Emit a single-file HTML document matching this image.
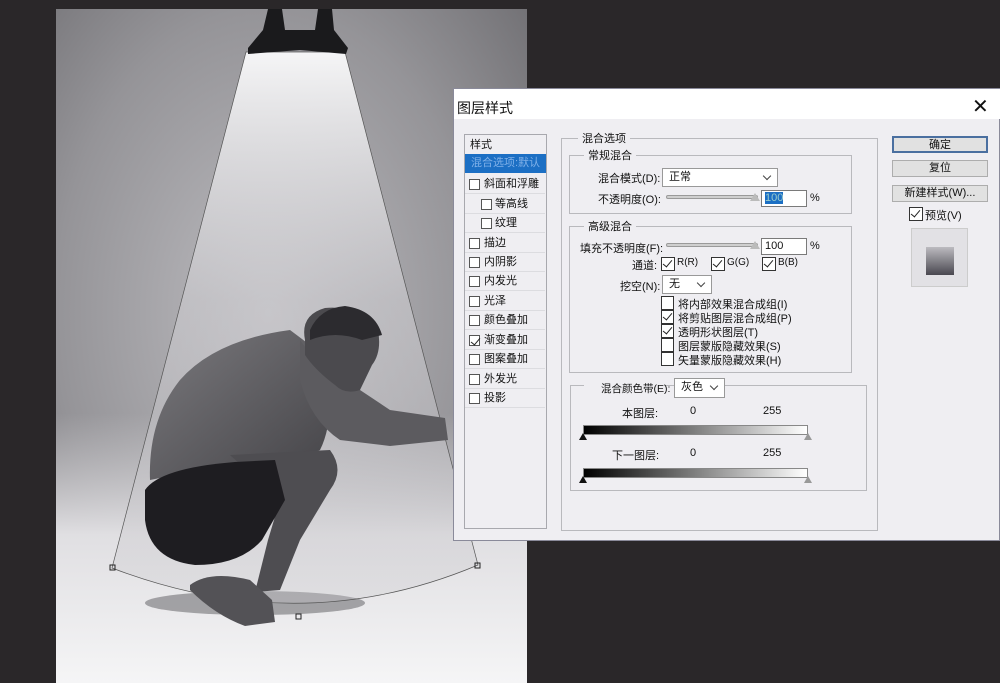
<!DOCTYPE html>
<html><head><meta charset="utf-8"><style>
*{margin:0;padding:0;box-sizing:border-box}
body{width:1000px;height:683px;overflow:hidden;background:#2a2729;position:relative;font-family:"Liberation Sans","Noto Sans CJK SC",sans-serif;font-size:11px;color:#111}
.a{position:absolute;white-space:nowrap}
.box{position:absolute;border:1px solid #b9b9bd}
.cb{position:absolute;width:12px;height:12px;border:1px solid #333;background:#fff}
.cbl{position:absolute;width:11px;height:11px;border:1px solid #555;background:#fff}
.chk:after{content:"";position:absolute;left:3px;top:0px;width:4px;height:8px;border:solid #222;border-width:0 1.5px 1.5px 0;transform:rotate(40deg)}
.leg{position:absolute;background:#efeef2;padding:0 4px}
.btn{position:absolute;background:#e1e1e1;border:1px solid #adadad;text-align:center;line-height:15px}
.inp{position:absolute;background:#fff;border:1px solid #7a7a7a;padding-left:3px;line-height:15px}
.sl{position:absolute;height:4px;background:#cfcfcf;border:1px solid #9a9a9a;border-radius:2px}
.dd{position:absolute;background:#fff;border:1px solid #999;padding-left:6px;line-height:17px}
.dd:after{content:"";position:absolute;right:7px;top:4px;width:5px;height:5px;border:solid #444;border-width:0 1px 1px 0;transform:rotate(45deg)}
.row{position:absolute;left:1px;width:80px;height:19px;border-bottom:1px solid #dcdce0;line-height:18px;padding-left:19px}
.row .cbl{left:4px;top:4px}
</style></head><body>
<svg class="a" style="left:0;top:0" width="1000" height="683">
<defs>
<radialGradient id="bg" cx="0.45" cy="0.45" r="0.75"><stop offset="0" stop-color="#bcbbbf"/><stop offset="0.6" stop-color="#959498"/><stop offset="1" stop-color="#6e6d71"/></radialGradient>
<linearGradient id="fl" x1="0" y1="0" x2="0" y2="1"><stop offset="0" stop-color="#fff" stop-opacity="0"/><stop offset="0.6" stop-color="#d8d7da" stop-opacity="0"/><stop offset="0.78" stop-color="#e0dfe2"/><stop offset="1" stop-color="#f5f5f6"/></linearGradient>
<linearGradient id="cone" x1="0" y1="0" x2="0" y2="1"><stop offset="0" stop-color="#fafafb" stop-opacity="0.95"/><stop offset="0.45" stop-color="#d0cfd3" stop-opacity="0.55"/><stop offset="1" stop-color="#c8c7cb" stop-opacity="0.3"/></linearGradient>
<linearGradient id="skin" x1="0" y1="0" x2="1" y2="1"><stop offset="0" stop-color="#7a797d"/><stop offset="1" stop-color="#454448"/></linearGradient>
</defs>
<rect x="56" y="9" width="471" height="674" fill="url(#bg)"/>
<rect x="56" y="9" width="471" height="674" fill="url(#fl)"/>
<ellipse cx="255" cy="603" rx="110" ry="12" fill="#4a494d" opacity="0.45"/>
<path d="M246 52 L345 52 L478 565 Q300 640 112 568 Z" fill="url(#cone)" stroke="#555" stroke-width="0.7"/>
<path d="M268 9 L282 9 L285 30 L315 30 L318 9 L332 9 L334 30 L348 48 L346 54 L300 50 L248 54 L248 48 L263 30 Z" fill="#1a1a1c"/>
<!-- man -->
<path d="M150 480 Q148 420 180 380 Q215 340 290 330 L310 345 L330 400 Q330 430 320 450 L280 465 L200 470 Z" fill="url(#skin)"/>
<path d="M300 340 Q320 370 360 390 L390 410 L445 418 L448 440 L390 446 L340 440 Q310 420 300 380 Z" fill="#5c5b5f"/>
<path d="M305 340 Q300 315 325 308 Q360 305 378 330 Q382 352 372 365 L360 390 Q345 395 335 385 Q315 370 305 355 Z" fill="#4b4a4e"/>
<path d="M310 330 Q320 308 345 306 Q375 310 382 335 L362 340 Q335 330 310 340 Z" fill="#2c2b2f"/>
<path d="M230 455 L330 450 Q345 470 330 490 L300 540 L280 590 L255 592 L268 540 L280 500 Z" fill="#4e4d51"/>
<path d="M145 490 Q160 468 235 462 L275 460 L285 500 L262 540 Q240 565 195 565 Q150 560 145 520 Z" fill="#1e1d21"/>
<path d="M190 585 Q210 570 250 580 L272 600 L275 622 L245 626 Q215 615 190 590 Z" fill="#535256"/>
<rect x="110" y="565" width="5" height="5" fill="none" stroke="#222"/>
<rect x="475" y="563" width="5" height="5" fill="none" stroke="#222"/>
<rect x="296" y="614" width="5" height="5" fill="none" stroke="#222"/>
</svg>

<div class="a" style="left:453px;top:88px;width:547px;height:453px;background:#efeef2;border:1px solid #8a8a9a"></div>
<div class="a" style="left:454px;top:89px;width:546px;height:30px;background:#fff"></div>
<div class="a" style="left:457px;top:98px;font-size:14px">图层样式</div>
<div class="a" style="left:972px;top:94px;font-size:20px;font-weight:300">✕</div>

<div class="a" style="left:464px;top:134px;width:83px;height:395px;border:1px solid #a8a8ae;background:#efeef2"></div>
<div class="a" style="left:470px;top:136px">样式</div>
<div class="a" style="left:465px;top:154px;width:81px;height:19px;background:#1c6fc4;color:#7fb0e8;padding-left:6px;line-height:18px">混合选项:默认</div>
<div class="a" style="left:464px;top:174px">
<div class="row" style="top:1px"><span class="cbl"></span>斜面和浮雕</div>
<div class="row" style="top:21px;padding-left:30px"><span class="cbl" style="left:16px"></span>等高线</div>
<div class="row" style="top:40px;padding-left:30px"><span class="cbl" style="left:16px"></span>纹理</div>
<div class="row" style="top:60px"><span class="cbl"></span>描边</div>
<div class="row" style="top:79px"><span class="cbl"></span>内阴影</div>
<div class="row" style="top:98px"><span class="cbl"></span>内发光</div>
<div class="row" style="top:118px"><span class="cbl"></span>光泽</div>
<div class="row" style="top:137px"><span class="cbl"></span>颜色叠加</div>
<div class="row" style="top:157px"><span class="cbl chk"></span>渐变叠加</div>
<div class="row" style="top:176px"><span class="cbl"></span>图案叠加</div>
<div class="row" style="top:196px"><span class="cbl"></span>外发光</div>
<div class="row" style="top:215px"><span class="cbl"></span>投影</div>
</div>

<div class="box" style="left:561px;top:138px;width:317px;height:393px"></div>
<div class="leg" style="left:578px;top:130px">混合选项</div>
<div class="box" style="left:569px;top:155px;width:283px;height:59px"></div>
<div class="leg" style="left:584px;top:147px">常规混合</div>
<div class="a" style="left:598px;top:170px">混合模式(D):</div>
<div class="dd" style="left:662px;top:168px;width:116px;height:19px">正常</div>
<div class="a" style="left:598px;top:191px">不透明度(O):</div>
<div class="sl" style="left:666px;top:195px;width:92px"></div>
<div class="a" style="left:750px;top:193px;width:0;height:0;border-left:5px solid transparent;border-right:5px solid transparent;border-bottom:8px solid #bbb"></div>
<div class="inp" style="left:761px;top:190px;width:46px;height:17px"><span style="background:#1c6fc4;color:#9cc">100</span></div>
<div class="a" style="left:810px;top:192px">%</div>

<div class="box" style="left:569px;top:226px;width:283px;height:147px"></div>
<div class="leg" style="left:584px;top:218px">高级混合</div>
<div class="a" style="left:580px;top:240px">填充不透明度(F):</div>
<div class="sl" style="left:666px;top:243px;width:92px"></div>
<div class="a" style="left:750px;top:241px;width:0;height:0;border-left:5px solid transparent;border-right:5px solid transparent;border-bottom:8px solid #bbb"></div>
<div class="inp" style="left:761px;top:238px;width:46px;height:17px">100</div>
<div class="a" style="left:810px;top:240px">%</div>
<div class="a" style="left:632px;top:257px">通道:</div>
<div class="cb chk" style="left:661px;top:257px;width:14px;height:14px"></div><div class="a" style="left:677px;top:257px;font-size:10px">R(R)</div>
<div class="cb chk" style="left:711px;top:257px;width:14px;height:14px"></div><div class="a" style="left:727px;top:257px;font-size:10px">G(G)</div>
<div class="cb chk" style="left:762px;top:257px;width:14px;height:14px"></div><div class="a" style="left:778px;top:257px;font-size:10px">B(B)</div>
<div class="a" style="left:620px;top:278px">挖空(N):</div>
<div class="dd" style="left:662px;top:275px;width:50px;height:19px">无</div>
<div class="cb" style="left:661px;top:296px;width:13px;height:14px"></div><div class="a" style="left:678px;top:296px">将内部效果混合成组(I)</div>
<div class="cb chk" style="left:661px;top:310px;width:13px;height:14px"></div><div class="a" style="left:678px;top:310px">将剪贴图层混合成组(P)</div>
<div class="cb chk" style="left:661px;top:324px;width:13px;height:14px"></div><div class="a" style="left:678px;top:324px">透明形状图层(T)</div>
<div class="cb" style="left:661px;top:338px;width:13px;height:14px"></div><div class="a" style="left:678px;top:338px">图层蒙版隐藏效果(S)</div>
<div class="cb" style="left:661px;top:352px;width:13px;height:14px"></div><div class="a" style="left:678px;top:352px">矢量蒙版隐藏效果(H)</div>

<div class="box" style="left:570px;top:385px;width:297px;height:106px"></div>
<div class="leg" style="left:584px;top:378px;width:80px;height:12px"></div>
<div class="a" style="left:601px;top:381px;font-size:10.5px">混合颜色带(E):</div>
<div class="dd" style="left:674px;top:378px;width:51px;height:20px">灰色</div>
<div class="a" style="left:622px;top:405px">本图层:</div>
<div class="a" style="left:690px;top:405px">0</div>
<div class="a" style="left:763px;top:405px">255</div>
<div class="a" style="left:583px;top:425px;width:225px;height:10px;background:linear-gradient(90deg,#000,#fff);border:1px solid #888"></div>
<div class="a" style="left:579px;top:433px;width:0;height:0;border-left:4px solid transparent;border-right:4px solid transparent;border-bottom:7px solid #111"></div>
<div class="a" style="left:804px;top:433px;width:0;height:0;border-left:4px solid transparent;border-right:4px solid transparent;border-bottom:7px solid #999"></div>
<div class="a" style="left:612px;top:447px">下一图层:</div>
<div class="a" style="left:690px;top:447px">0</div>
<div class="a" style="left:763px;top:447px">255</div>
<div class="a" style="left:583px;top:468px;width:225px;height:10px;background:linear-gradient(90deg,#000,#fff);border:1px solid #888"></div>
<div class="a" style="left:579px;top:476px;width:0;height:0;border-left:4px solid transparent;border-right:4px solid transparent;border-bottom:7px solid #111"></div>
<div class="a" style="left:804px;top:476px;width:0;height:0;border-left:4px solid transparent;border-right:4px solid transparent;border-bottom:7px solid #999"></div>

<div class="btn" style="left:892px;top:136px;width:96px;height:17px;border:2px solid #4a6fa0">确定</div>
<div class="btn" style="left:892px;top:160px;width:96px;height:17px">复位</div>
<div class="btn" style="left:892px;top:185px;width:96px;height:17px">新建样式(W)...</div>
<div class="cb chk" style="left:909px;top:207px;width:14px;height:14px"></div>
<div class="a" style="left:925px;top:207px">预览(V)</div>
<div class="a" style="left:911px;top:228px;width:57px;height:59px;background:#e2e1e5;border:1px solid #ccc"></div>
<div class="a" style="left:926px;top:247px;width:28px;height:28px;background:linear-gradient(#bcbbc0,#4a4850)"></div>
</body></html>
